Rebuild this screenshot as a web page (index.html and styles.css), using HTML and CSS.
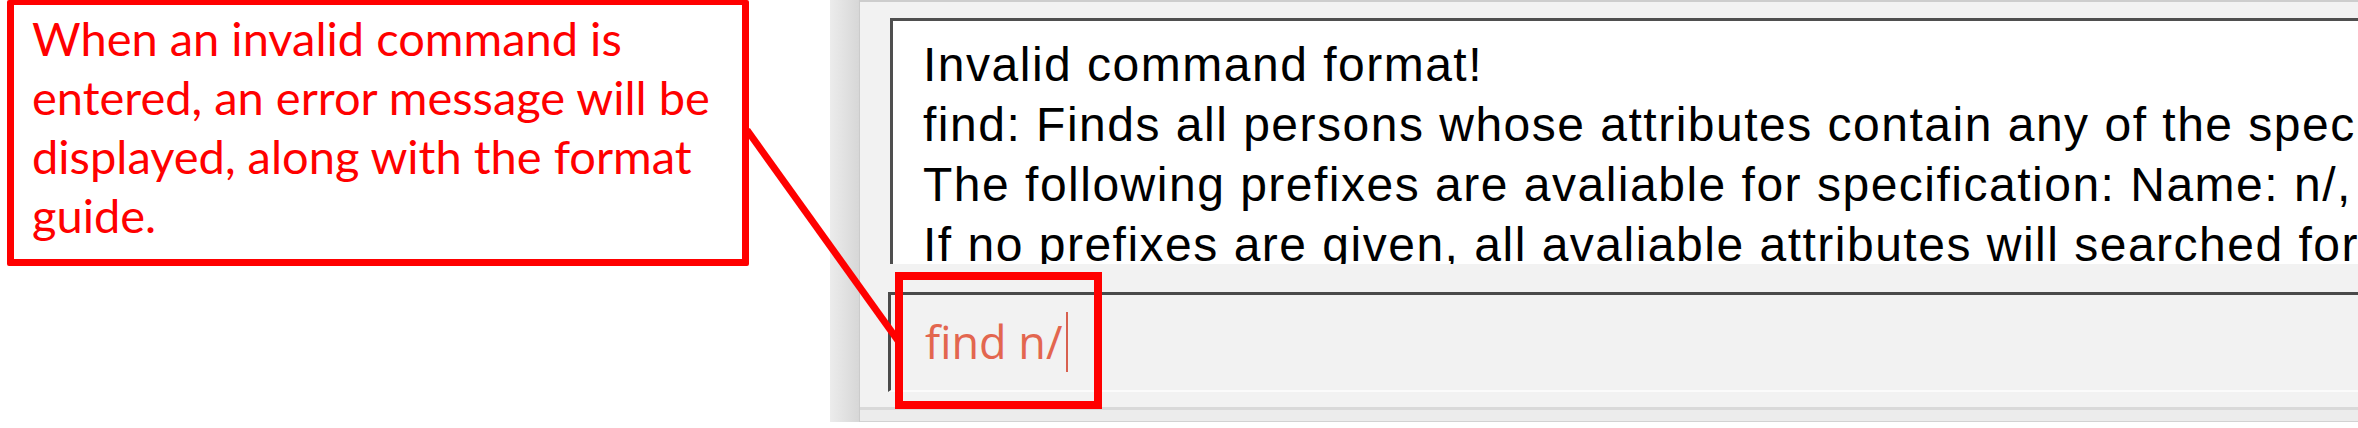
FILE: index.html
```html
<!DOCTYPE html>
<html lang="en">
<head>
<meta charset="utf-8">
<title>Invalid command annotation</title>
<link rel="stylesheet" href="styles.css">
</head>
<body>
<div class="stage">
  <div class="callout">
    <span class="callout-line">When an invalid command is</span>
    <span class="callout-line">entered, an error message will be</span>
    <span class="callout-line">displayed, along with the format</span>
    <span class="callout-line">guide.</span>
  </div>

  <div class="window">
    <div class="edge"></div>
    <div class="panel">
      <div class="result">
        <div class="result-line">Invalid command format!</div>
        <div class="result-line">find: Finds all persons whose attributes contain any of the specified keywords (case-insensitive) and displays them as a list with index numbers.</div>
        <div class="result-line">The following prefixes are avaliable for specification: Name: n/, Phone: p/, Email: e/, Address: a/, Tag: t/</div>
        <div class="result-line">If no prefixes are given, all avaliable attributes will searched for the keywords.</div>
      </div>
      <div class="command">
        <span class="command-text">find n/</span><span class="caret"></span>
      </div>
      <div class="status"></div>
    </div>
  </div>

  <div class="highlight"></div>
  <svg class="connector" width="2358" height="428" viewBox="0 0 2358 428">
    <line x1="747" y1="130" x2="899" y2="342" stroke="#ff0000" stroke-width="7" />
  </svg>
</div>
</body>
</html>
```

FILE: styles.css
```css
html, body {
  margin: 0;
  padding: 0;
  background: #ffffff;
}

.stage {
  position: relative;
  width: 2358px;
  height: 428px;
  overflow: hidden;
  display: flex;
  align-items: flex-start;
}

/* ---------- annotation callout ---------- */
.callout {
  box-sizing: border-box;
  flex: 0 0 auto;
  width: 742px;
  height: 266px;
  margin-left: 7px;
  border: 7px solid #ff0000;
  border-top-width: 5px;
  border-radius: 2px;
  padding: 4px 0 0 18px;
  display: flex;
  flex-direction: column;
  font-family: Lato, "Open Sans", sans-serif;
  font-size: 47px;
  line-height: 59px;
  color: #ff0000;
  white-space: nowrap;
}

.callout-line {
  display: block;
}

/* ---------- application window ---------- */
.window {
  flex: 0 0 auto;
  margin-left: 81px;
  width: 1528px;
  height: 422px;
  display: flex;
}

.edge {
  flex: 0 0 auto;
  width: 29px;
  height: 100%;
  background: linear-gradient(to right, #ececec, #d7d7d7);
  border-right: 1px solid #cbcbcb;
}

.panel {
  flex: 1 1 auto;
  min-width: 0;
  background: #f2f2f2;
  border-top: 2px solid #cdcdcd;
  display: flex;
  flex-direction: column;
  overflow: hidden;
}

.result {
  box-sizing: border-box;
  flex: 0 0 auto;
  margin: 16px -40px 0 30px;
  height: 246px;
  background: #ffffff;
  border-top: 3px solid #4f4f4f;
  border-left: 3px solid #4f4f4f;
  padding: 14px 0 0 30px;
  overflow: hidden;
  font-family: "Liberation Sans", Arial, sans-serif;
  font-size: 48px;
  line-height: 60px;
  letter-spacing: 1.5px;
  color: #000000;
  white-space: nowrap;
}

.command {
  box-sizing: border-box;
  flex: 0 0 auto;
  margin: 28px -40px 0 28px;
  height: 100px;
  background: #f2f2f2;
  border-top: 3px solid #4a4a4a;
  border-left: 3px solid #4a4a4a;
  border-bottom: 2px solid #fbfbfb;
  padding: 17px 0 0 34px;
  display: flex;
  align-items: flex-start;
  font-family: "Open Sans", "Noto Sans", sans-serif;
  font-size: 45px;
  line-height: 60px;
  color: #e3664f;
  white-space: nowrap;
}

.caret {
  display: inline-block;
  width: 2px;
  height: 60px;
  margin-left: 4px;
  background: #d8604f;
}

.status {
  flex: 1 1 auto;
  margin-top: 15px;
  border-top: 3px solid #d9d9d9;
  border-bottom: 1px solid #d2d2d2;
  background: #ececec;
}

/* ---------- overlays ---------- */
.highlight {
  position: absolute;
  left: 895px;
  top: 272px;
  width: 207px;
  height: 137px;
  box-sizing: border-box;
  border: 8px solid #ff0000;
  z-index: 2;
}

.connector {
  position: absolute;
  left: 0;
  top: 0;
  z-index: 3;
  pointer-events: none;
}
```
